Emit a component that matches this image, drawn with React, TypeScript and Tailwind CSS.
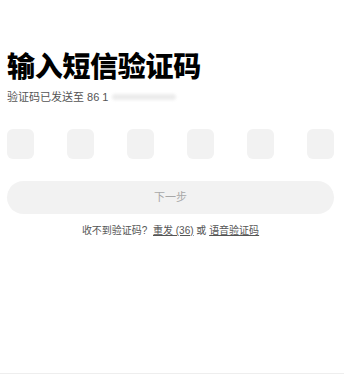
import { useState } from "react";

const font = "font-['Liberation_Sans','Noto_Sans_CJK_SC',sans-serif]";

export default function App() {
  const [code] = useState(["", "", "", "", "", ""]);

  return (
    <div className={`w-[344px] h-[391px] bg-white flex flex-col ${font}`}>
      <div className="flex-1 pl-[7px] pr-[10px] pt-[50px]">
        <h1 className="text-[28px] leading-[35px] font-black text-black tracking-[-0.3px]">
          输入短信验证码
        </h1>
        <div className="mt-[5px] flex items-center text-[11px] leading-[14px] text-[#555]">
          <span>验证码已发送至 86 1</span>
          <span className="ml-[4px] h-[6px] w-[64px] rounded-full bg-[#ececec] blur-[1.5px]" />
        </div>

        <div className="mt-[25px] flex justify-between">
          {code.map((c, i) => (
            <div
              key={i}
              className="h-[30px] w-[27px] rounded-[6px] bg-[#f2f2f2] grid place-items-center text-[15px]"
            >
              {c}
            </div>
          ))}
        </div>

        <button className="mt-[22px] h-[33px] w-full rounded-full bg-[#f2f2f2] text-[11px] text-[#a8a8a8]">
          下一步
        </button>

        <div className="mt-[10px] text-center text-[10px] leading-[14px] text-[#555]">
          收不到验证码?&nbsp; <span className="underline">重发 (36)</span> 或{" "}
          <span className="underline">语音验证码</span>
        </div>
      </div>
      <div className="h-[18px] border-t border-[#eeeeee]" />
    </div>
  );
}
